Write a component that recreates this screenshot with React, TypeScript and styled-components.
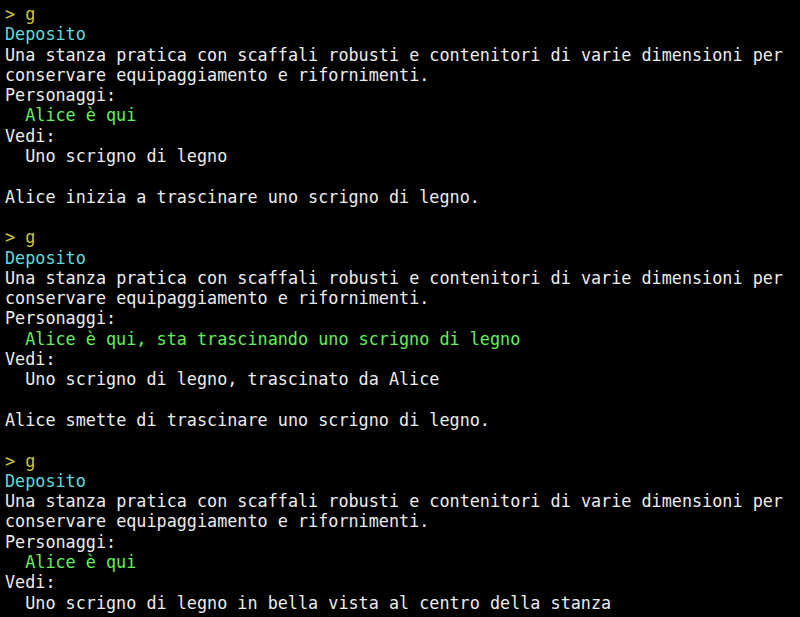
import React from "react";
import styled, { createGlobalStyle } from "styled-components";

const Global = createGlobalStyle`
  html, body {
    margin: 0;
    padding: 0;
    background: #000000;
  }
  #root {
    min-height: 617px;
    background: #000000;
  }
`;

const Terminal = styled.div`
  box-sizing: border-box;
  width: 800px;
  height: 617px;
  overflow: hidden;
  background: #000000;
  padding: 4px 0 0 5px;
  font-family: "DejaVu Sans Mono", "Liberation Mono", monospace;
  font-size: 16.8px;
  line-height: 20.3px;
  color: #ececec;
`;

type Tone = "prompt" | "room" | "char" | "plain";

const toneColor: Record<Tone, string> = {
  prompt: "#c9c63c",
  room: "#5fd9df",
  char: "#62ef5b",
  plain: "#ececec",
};

const Line = styled.div<{ $tone?: Tone; $indent?: boolean }>`
  white-space: pre;
  height: 20.3px;
  color: ${(p) => toneColor[p.$tone ?? "plain"]};
  padding-left: ${(p) => (p.$indent ? "20.2px" : "0")};
`;

const Block = styled.section`
  display: flex;
  flex-direction: column;
`;

const desc = [
  "Una stanza pratica con scaffali robusti e contenitori di varie dimensioni per",
  "conservare equipaggiamento e rifornimenti.",
];

type Turn = { who: string; what: string; event?: string };

const turns: Turn[] = [
  {
    who: "Alice è qui",
    what: "Uno scrigno di legno",
    event: "Alice inizia a trascinare uno scrigno di legno.",
  },
  {
    who: "Alice è qui, sta trascinando uno scrigno di legno",
    what: "Uno scrigno di legno, trascinato da Alice",
    event: "Alice smette di trascinare uno scrigno di legno.",
  },
  {
    who: "Alice è qui",
    what: "Uno scrigno di legno in bella vista al centro della stanza",
  },
];

export default function App() {
  return (
    <>
      <Global />
      <Terminal>
        {turns.map((t, i) => (
          <Block key={i}>
            <Line $tone="prompt">{"> g"}</Line>
            <Line $tone="room">Deposito</Line>
            {desc.map((d) => (
              <Line key={d}>{d}</Line>
            ))}
            <Line>Personaggi:</Line>
            <Line $tone="char" $indent>
              {t.who}
            </Line>
            <Line>Vedi:</Line>
            <Line $indent>{t.what}</Line>
            {t.event && (
              <>
                <Line> </Line>
                <Line>{t.event}</Line>
                <Line> </Line>
              </>
            )}
          </Block>
        ))}
      </Terminal>
    </>
  );
}
